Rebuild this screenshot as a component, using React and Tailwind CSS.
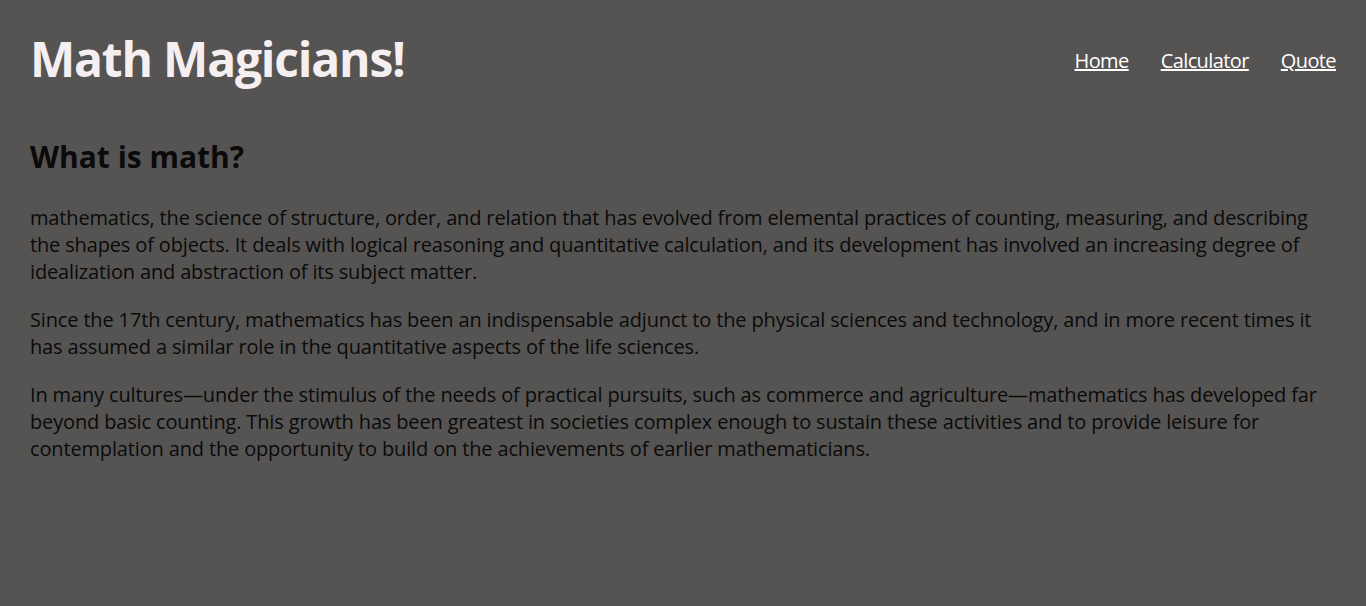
import React from 'react'

const paragraphs = [
  'mathematics, the science of structure, order, and relation that has evolved from elemental practices of counting, measuring, and describing the shapes of objects. It deals with logical reasoning and quantitative calculation, and its development has involved an increasing degree of idealization and abstraction of its subject matter.',
  'Since the 17th century, mathematics has been an indispensable adjunct to the physical sciences and technology, and in more recent times it has assumed a similar role in the quantitative aspects of the life sciences.',
  'In many cultures\u2014under the stimulus of the needs of practical pursuits, such as commerce and agriculture\u2014mathematics has developed far beyond basic counting. This growth has been greatest in societies complex enough to sustain these activities and to provide leisure for contemplation and the opportunity to build on the achievements of earlier mathematicians.',
]

const App = () => {
  return (
    <div className="min-h-screen bg-[#555453] px-[30px] font-['Open_Sans',sans-serif]">
      <header className="flex items-center justify-between pt-[27px]">
        <h1 className="text-[48px] font-bold leading-[64px] tracking-[-1.2px] text-[#f6eff1]">Math Magicians!</h1>
        <nav className="pt-1">
          <ul className="flex items-center gap-8 text-[20px] tracking-[-0.6px] text-white">
            <li><a href="#" className="underline">Home</a></li>
            <li><a href="#" className="underline">Calculator</a></li>
            <li><a href="#" className="underline">Quote</a></li>
          </ul>
        </nav>
      </header>

      <main className="mt-[46px] text-[#0a0a0a]">
        <h2 className="text-[30px] font-bold leading-[40px]">What is math?</h2>
        <div className="mt-[27px] flex flex-col gap-[21px] text-[20px] leading-[27px] tracking-[-0.15px]">
          {paragraphs.map((text, i) => (
            <p key={i}>{text}</p>
          ))}
        </div>
      </main>
    </div>
  )
}

export default App
